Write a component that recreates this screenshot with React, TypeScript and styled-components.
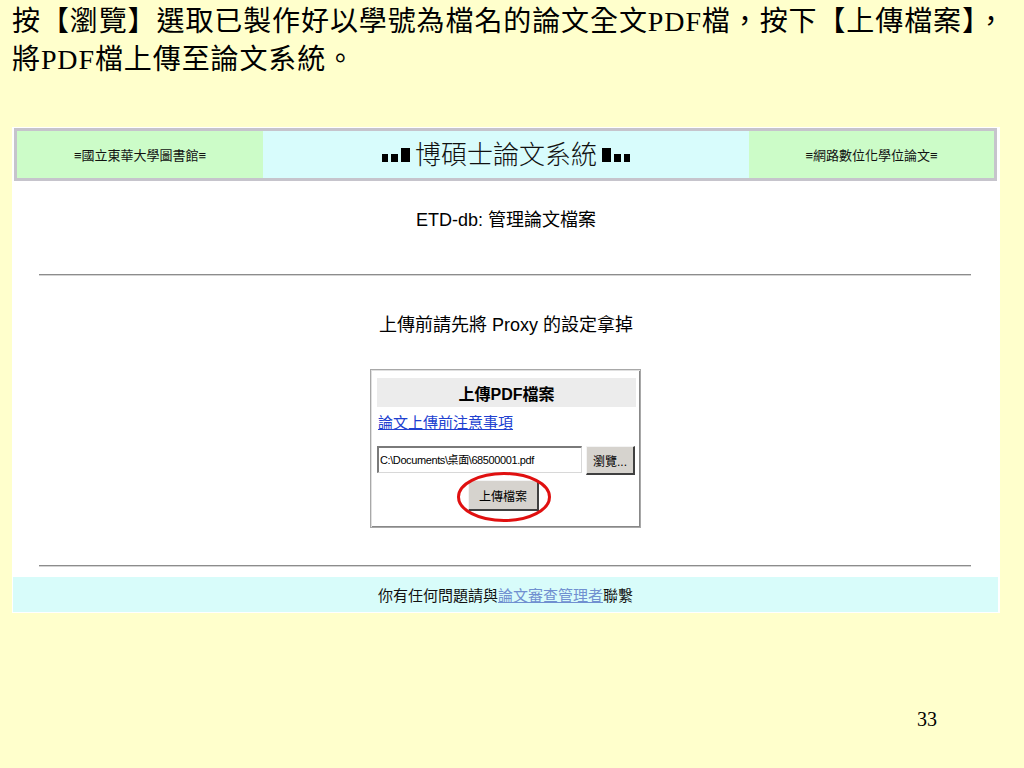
import React from "react";
import styled, { createGlobalStyle } from "styled-components";

const GlobalStyle = createGlobalStyle`
  html, body {
    margin: 0;
    padding: 0;
    background: #ffffcc;
  }
`;

const cjk = `"Liberation Sans", "Noto Sans CJK TC", sans-serif`;

const App: React.FC = () => {
  return (
    <>
      <GlobalStyle />
      <Slide>
        <Caption>
          按【瀏覽】選取已製作好以學號為檔名的論文全文PDF檔，按下【上傳檔案】，
          <br />
          將PDF檔上傳至論文系統。
        </Caption>

        <Browser>
          <TopBar>
            <SideCell>≡國立東華大學圖書館≡</SideCell>
            <CenterCell>
              <Dot $w={6} $h={8} />
              <Dot $w={7} $h={8} />
              <Dot $w={9} $h={14} />
              <SystemName>博碩士論文系統</SystemName>
              <Dot $w={9} $h={14} />
              <Dot $w={7} $h={8} />
              <Dot $w={6} $h={8} />
            </CenterCell>
            <SideCell>≡網路數位化學位論文≡</SideCell>
          </TopBar>

          <PageHeading>ETD-db: 管理論文檔案</PageHeading>
          <Rule $top={42} />
          <Notice>上傳前請先將 Proxy 的設定拿掉</Notice>

          <UploadBox>
            <BoxTitle>上傳PDF檔案</BoxTitle>
            <BoxLink href="#">論文上傳前注意事項</BoxLink>
            <FileRow>
              <FileInput>C:\Documents\桌面\68500001.pdf</FileInput>
              <GrayButton $w={49} $h={29}>瀏覽...</GrayButton>
            </FileRow>
            <SubmitRow>
              <Highlight>
                <GrayButton $w={71} $h={31}>上傳檔案</GrayButton>
                <Ring viewBox="0 0 96 52">
                  <ellipse cx="48" cy="26" rx="45.5" ry="23.5" fill="none" stroke="#e01010" strokeWidth="3" />
                </Ring>
              </Highlight>
            </SubmitRow>
          </UploadBox>

          <Rule $top={37} />
          <FooterBar>
            你有任何問題請與<FooterLink href="#">論文審查管理者</FooterLink>聯繫
          </FooterBar>
        </Browser>

        <PageNumber>33</PageNumber>
      </Slide>
    </>
  );
};

export default App;

const Slide = styled.div`
  width: 1024px;
  height: 768px;
  box-sizing: border-box;
  padding: 3px 12px 0 12px;
  display: flex;
  flex-direction: column;
  background: #ffffcc;
  overflow: hidden;
`;

const Caption = styled.div`
  font-family: "Liberation Serif", "Noto Sans CJK TC", serif;
  font-size: 28px;
  letter-spacing: 0.9px;
  line-height: 38px;
  color: #000;
  white-space: nowrap;
`;

const Browser = styled.div`
  margin-top: 48px;
  width: 988px;
  background: #fff;
  padding: 1px 0 1px 0;
  display: flex;
  flex-direction: column;
`;

const TopBar = styled.div`
  margin: 0 3px 0 2px;
  border: 3px solid #c6c4cc;
  display: grid;
  grid-template-columns: 246px 1fr 245px;
  height: 47px;
`;

const SideCell = styled.div`
  background: #ccfcc8;
  display: flex;
  align-items: center;
  justify-content: center;
  font-family: ${cjk};
  font-size: 13px;
  color: #111;
`;

const CenterCell = styled.div`
  background: #d8fcfc;
  display: flex;
  align-items: center;
  justify-content: center;
  gap: 3px;
`;

const Dot = styled.span<{ $w: number; $h: number }>`
  display: inline-block;
  width: ${({ $w }) => $w}px;
  height: ${({ $h }) => $h}px;
  background: #000;
  align-self: center;
  margin-top: ${({ $h }) => 14 - $h}px;
`;

const SystemName = styled.span`
  font-family: ${cjk};
  font-size: 26px;
  font-weight: 300;
  color: #111;
  margin: 0 2px;
  line-height: 30px;
`;

const PageHeading = styled.div`
  margin-top: 27px;
  text-align: center;
  font-family: ${cjk};
  font-size: 18px;
  line-height: 24px;
  color: #000;
`;

const Rule = styled.div<{ $top: number }>`
  margin: ${({ $top }) => $top}px 29px 0 27px;
  border-top: 1px solid #8c8c8c;
  border-bottom: 1px solid #d4d4d4;
`;

const Notice = styled.div`
  margin-top: 37px;
  text-align: center;
  font-family: ${cjk};
  font-size: 18px;
  line-height: 24px;
  color: #000;
`;

const UploadBox = styled.div`
  align-self: flex-start;
  margin: 32px 0 0 358px;
  width: 271px;
  height: 159px;
  box-sizing: border-box;
  border: 1px solid #a8a8a8;
  box-shadow: inset 1px 1px 0 #e0e0e0, inset -1px -1px 0 #888;
  padding: 8px 4px 0 6px;
  display: flex;
  flex-direction: column;
`;

const BoxTitle = styled.div`
  height: 29px;
  background: #ececec;
  display: flex;
  align-items: center;
  justify-content: center;
  font-family: ${cjk};
  font-weight: 700;
  font-size: 16px;
  color: #000;
`;

const BoxLink = styled.a`
  margin-top: 3px;
  font-family: ${cjk};
  font-size: 15px;
  line-height: 26px;
  color: #2040d0;
  text-decoration: underline;
  align-self: flex-start;
  padding-left: 1px;
`;

const FileRow = styled.div`
  margin-top: 10px;
  display: flex;
  align-items: flex-start;
  gap: 4px;
`;

const FileInput = styled.div`
  width: 205px;
  height: 27px;
  box-sizing: border-box;
  border-top: 2px solid #7a7a7a;
  border-left: 2px solid #7a7a7a;
  border-right: 1px solid #d8d8d8;
  border-bottom: 1px solid #d8d8d8;
  background: #fff;
  font-family: ${cjk};
  font-size: 11px;
  letter-spacing: -0.4px;
  line-height: 24px;
  padding-left: 1px;
  white-space: nowrap;
  overflow: hidden;
  color: #000;
`;

const GrayButton = styled.div<{ $w: number; $h: number }>`
  width: ${({ $w }) => $w}px;
  height: ${({ $h }) => $h}px;
  box-sizing: border-box;
  background: #d6d3ce;
  border-top: 1px solid #f4f4f4;
  border-left: 1px solid #f4f4f4;
  border-right: 2px solid #404040;
  border-bottom: 2px solid #404040;
  display: flex;
  align-items: center;
  justify-content: center;
  font-family: ${cjk};
  font-size: 12px;
  color: #000;
`;

const SubmitRow = styled.div`
  margin-top: 5px;
  display: flex;
  justify-content: center;
  padding-right: 8px;
`;

const Highlight = styled.div`
  position: relative;
  margin-left: 2px;
`;

const Ring = styled.svg`
  position: absolute;
  left: -12px;
  top: -9px;
  width: 96px;
  height: 52px;
  pointer-events: none;
`;

const FooterBar = styled.div`
  margin: 10px 2px 0 1px;
  height: 35px;
  background: #d8fcfa;
  display: flex;
  align-items: center;
  justify-content: center;
  font-family: ${cjk};
  font-size: 15px;
  color: #111;
`;

const FooterLink = styled.a`
  color: #7090d0;
  text-decoration: underline;
`;

const PageNumber = styled.div`
  margin-top: auto;
  margin-bottom: 37px;
  margin-left: 905px;
  font-family: "Liberation Serif", serif;
  font-size: 20px;
  color: #000;
`;
